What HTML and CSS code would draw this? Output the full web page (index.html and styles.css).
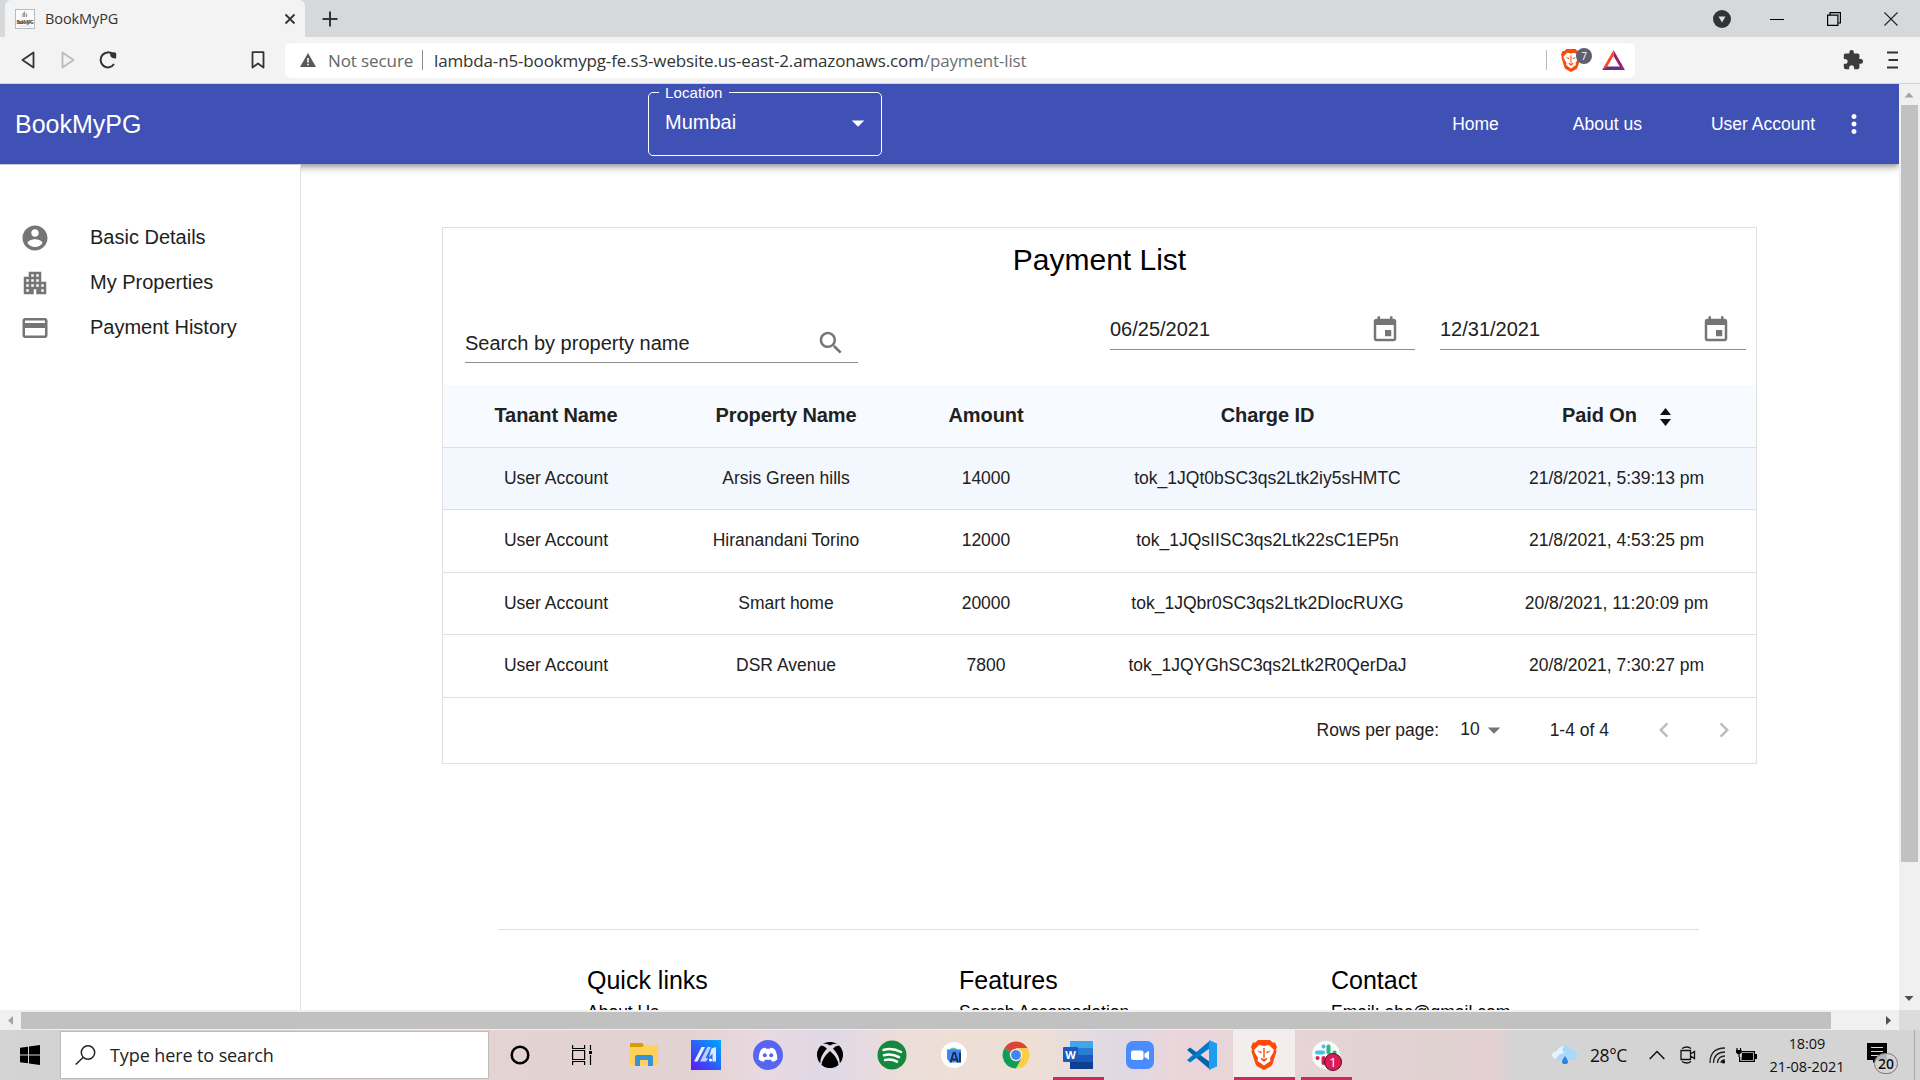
FILE: index.html
```html
<!DOCTYPE html>
<html lang="en">
<head>
<meta charset="utf-8">
<title>BookMyPG</title>
<link rel="stylesheet" href="styles.css">
</head>
<body>
<div class="screen">
  <div class="tabstrip">
    <div class="tab">
      <svg class="favicon" width="20" height="20" viewBox="0 0 20 20"><rect x=".5" y=".5" width="19" height="19" fill="#fafafa" stroke="#bbb"/><path d="M8 8V5l1.500-1.500V8M11.500 4.500V8" fill="none" stroke="#999" stroke-width="1.300"/><text x="1.500" y="14.500" font-size="5" font-weight="bold" textLength="17" fill="#555">BookMyPG</text><path d="M4 17h12" stroke="#ddd"/></svg>
      <span class="tab-title">BookMyPG</span>
      <svg width="12" height="12" viewBox="0 0 12 12"><path d="M1.500 1.500l9 9M10.500 1.500l-9 9" stroke="#333" stroke-width="1.800"/></svg>
    </div>
    <svg class="plus" width="16" height="16" viewBox="0 0 16 16"><path d="M8 .5v15M.5 8h15" stroke="#333" stroke-width="2"/></svg>
    <div class="window-controls">
      <svg width="18" height="18" viewBox="0 0 18 18"><circle cx="9" cy="9" r="9" fill="#333"/><path d="M5.500 6.500h7L9 12.500z" fill="#dcdfe1"/></svg>
      <svg width="14" height="14" viewBox="0 0 14 14"><path d="M0 7.500h14" stroke="#000" stroke-width="1"/></svg>
      <svg width="14" height="14" viewBox="0 0 14 14"><path d="M.6 3.100h10.300v10.300H.6zM3 3V.6h10.400V11H11" fill="none" stroke="#000" stroke-width="1.200"/></svg>
      <svg width="14" height="14" viewBox="0 0 14 14"><path d="M.5 .5l13 13M13.500 .5l-13 13" stroke="#222" stroke-width="1.100"/></svg>
    </div>
  </div>

  <div class="toolbar">
    <svg width="14" height="18" viewBox="0 0 14 18"><path d="M12.500 1.500v15L1.500 9z" fill="none" stroke="#333" stroke-width="1.800" stroke-linejoin="round"/></svg>
    <svg class="forward" width="14" height="18" viewBox="0 0 14 18"><path d="M1.500 1.500v15l11-7.500z" fill="none" stroke="#bbb" stroke-width="1.800" stroke-linejoin="round"/></svg>
    <svg class="reload" width="18" height="18" viewBox="0 0 18 18"><path d="M15 13A7.300 7.500 0 1 1 14 3.500" fill="none" stroke="#333" stroke-width="2"/><path d="M11.500 1.500q5-.5 5.500.5t0 5.500q-3.500 0-5-1.500t-.5-4.500z" fill="#333"/></svg>
    <svg class="bookmark" width="14" height="18" viewBox="0 0 14 18"><path d="M1.500 1.200h11v15.300L7 12.500l-5.500 4z" fill="none" stroke="#333" stroke-width="1.800" stroke-linejoin="round"/></svg>
    <div class="address">
      <svg width="16" height="14" viewBox="0 0 16 14"><path d="M8 0l8 14H0z" fill="#55585c"/><path d="M8 5v4.500M8 10.700v1.600" stroke="#fff" stroke-width="1.600"/></svg>
      <span class="insecure">Not secure</span>
      <i class="divider"></i>
      <span class="host">lambda-n5-bookmypg-fe.s3-website.us-east-2.amazonaws.com</span><span class="path">/payment-list</span>
      <i class="divider light"></i>
      <div class="shield">
        <svg width="20" height="23" viewBox="0 0 26 30"><use href="#brave"/></svg>
        <span class="shield-count">7</span>
      </div>
      <svg class="bat" width="23" height="20" viewBox="0 0 23 20"><path d="M11.500 0L0 20l5-3 6.500-11z" fill="#ff4724"/><path d="M11.500 0L23 20l-5-3-6.500-11z" fill="#9e1f63"/><path d="M0 20h23l-5-3.500H5z" fill="#662d91"/></svg>
    </div>
    <svg class="puzzle" width="22" height="22" viewBox="0 0 24 24"><path fill="#3c3c3c" d="M20.500 11H19V7c0-1.100-.9-2-2-2h-4V3.500a2.500 2.500 0 0 0-5 0V5H4c-1.100 0-1.990.9-1.990 2v3.800H3.500c1.490 0 2.700 1.210 2.700 2.700s-1.210 2.700-2.700 2.700H2V20c0 1.100.9 2 2 2h3.800v-1.500c0-1.490 1.210-2.700 2.700-2.700s2.700 1.210 2.700 2.700V22H17c1.100 0 2-.9 2-2v-4h1.500a2.500 2.500 0 0 0 0-5z"/></svg>
    <svg width="11" height="18" viewBox="0 0 11 18"><path d="M0 1.500h11M1.500 9H11M0 16.500h11" stroke="#333" stroke-width="1.800"/></svg>
  </div>

  <div class="viewport">
    <div class="page">
      <header class="appbar">
        <div class="brand">BookMyPG</div>
        <fieldset class="location">
          <legend>Location</legend>
          <div class="select"><span>Mumbai</span>
          <svg width="30" height="30" viewBox="0 0 24 24"><path d="M7 10l5 5 5-5z" fill="#fff"/></svg></div>
        </fieldset>
        <nav class="nav"><a>Home</a><a>About us</a><a>User Account</a></nav>
        <svg class="more" width="30" height="30" viewBox="0 0 24 24"><path fill="#fff" d="M12 8c1.100 0 2-.9 2-2s-.9-2-2-2-2 .9-2 2 .9 2 2 2zm0 2c-1.100 0-2 .9-2 2s.9 2 2 2 2-.9 2-2-.9-2-2-2zm0 6c-1.100 0-2 .9-2 2s.9 2 2 2 2-.9 2-2-.9-2-2-2z"/></svg>
      </header>
      <div class="body">
        <aside class="sidebar">
          <div class="side-item"><svg width="30" height="30" viewBox="0 0 24 24"><path d="M12 2C6.480 2 2 6.480 2 12s4.480 10 10 10 10-4.480 10-10S17.520 2 12 2zm0 3c1.660 0 3 1.340 3 3s-1.340 3-3 3-3-1.340-3-3 1.340-3 3-3zm0 14.200c-2.500 0-4.710-1.280-6-3.220.03-1.990 4-3.080 6-3.080 1.990 0 5.970 1.090 6 3.080-1.290 1.940-3.500 3.220-6 3.220z"/></svg><span>Basic Details</span></div>
          <div class="side-item"><svg width="30" height="30" viewBox="0 0 24 24"><path d="M17 11V3H7v4H3v14h8v-4h2v4h8V11h-4zM7 19H5v-2h2v2zm0-4H5v-2h2v2zm0-4H5V9h2v2zm4 4H9v-2h2v2zm0-4H9V9h2v2zm0-4H9V5h2v2zm4 8h-2v-2h2v2zm0-4h-2V9h2v2zm0-4h-2V5h2v2zm4 12h-2v-2h2v2zm0-4h-2v-2h2v2z"/></svg><span>My Properties</span></div>
          <div class="side-item"><svg width="30" height="30" viewBox="0 0 24 24"><path d="M20 4H4c-1.110 0-1.990.89-1.990 2L2 18c0 1.110.89 2 2 2h16c1.110 0 2-.89 2-2V6c0-1.110-.89-2-2-2zm0 14H4v-6h16v6zm0-10H4V6h16v2z"/></svg><span>Payment History</span></div>
        </aside>
        <main class="main">
          <section class="card">
            <h1>Payment List</h1>
            <div class="filters">
              <div class="field search"><span>Search by property name</span><svg width="30" height="30" viewBox="0 0 24 24"><path d="M15.500 14h-.79l-.28-.27C15.410 12.590 16 11.110 16 9.500 16 5.910 13.090 3 9.500 3S3 5.910 3 9.500 5.910 16 9.500 16c1.610 0 3.090-.59 4.230-1.570l.27.28v.79l5 4.990L20.490 19l-4.990-5zm-6 0C7.010 14 5 11.990 5 9.500S7.010 5 9.500 5 14 7.010 14 9.500 11.990 14 9.500 14z"/></svg></div>
              <div class="field date"><span>06/25/2021</span><svg width="30" height="30" viewBox="0 0 24 24"><path d="M17 12h-5v5h5v-5zM16 1v2H8V1H6v2H5c-1.110 0-1.990.9-1.990 2L3 19c0 1.100.89 2 2 2h14c1.100 0 2-.9 2-2V5c0-1.100-.9-2-2-2h-1V1h-2zm3 18H5V8h14v11z"/></svg></div>
              <div class="field date"><span>12/31/2021</span><svg width="30" height="30" viewBox="0 0 24 24"><path d="M17 12h-5v5h5v-5zM16 1v2H8V1H6v2H5c-1.110 0-1.990.9-1.990 2L3 19c0 1.100.89 2 2 2h14c1.100 0 2-.9 2-2V5c0-1.100-.9-2-2-2h-1V1h-2zm3 18H5V8h14v11z"/></svg></div>
            </div>
            <div class="row head"><span>Tanant Name</span><span>Property Name</span><span>Amount</span><span>Charge ID</span><span class="paid">Paid On<svg width="11" height="18" viewBox="0 0 11 18"><path d="M0 7l5.500-7L11 7zM0 11h11l-5.500 7z"/></svg></span></div>
            <div class="row hover"><span>User Account</span><span>Arsis Green hills</span><span>14000</span><span>tok_1JQt0bSC3qs2Ltk2iy5sHMTC</span><span>21/8/2021, 5:39:13 pm</span></div>
            <div class="row tall"><span>User Account</span><span>Hiranandani Torino</span><span>12000</span><span>tok_1JQsIISC3qs2Ltk22sC1EP5n</span><span>21/8/2021, 4:53:25 pm</span></div>
            <div class="row"><span>User Account</span><span>Smart home</span><span>20000</span><span>tok_1JQbr0SC3qs2Ltk2DIocRUXG</span><span>20/8/2021, 11:20:09 pm</span></div>
            <div class="row tall"><span>User Account</span><span>DSR Avenue</span><span>7800</span><span>tok_1JQYGhSC3qs2Ltk2R0QerDaJ</span><span>20/8/2021, 7:30:27 pm</span></div>
            <div class="pagination">
              <span>Rows per page:</span>
              <span class="size">10</span>
              <svg class="caret" width="30" height="30" viewBox="0 0 24 24"><path d="M7 10l5 5 5-5z"/></svg>
              <span class="range">1-4 of 4</span>
              <svg class="prev" width="30" height="30" viewBox="0 0 24 24"><path d="M15.410 7.410L14 6l-6 6 6 6 1.410-1.410L10.830 12z"/></svg>
              <svg class="next" width="30" height="30" viewBox="0 0 24 24"><path d="M10 6L8.590 7.410 13.170 12l-4.580 4.590L10 18l6-6z"/></svg>
            </div>
          </section>
          <footer class="footer">
            <div><h2>Quick links</h2><p>About Us</p></div>
            <div><h2>Features</h2><p>Search Accomodation</p></div>
            <div><h2>Contact</h2><p>Email: abc@gmail.com</p></div>
          </footer>
        </main>
      </div>
    </div>
    <div class="vscroll">
      <svg width="21" height="21" viewBox="0 0 21 21"><path d="M5.500 13.500L10 8.500l4.500 5z" fill="#a3a3a3"/></svg>
      <div class="vthumb"></div>
      <svg class="down" width="21" height="21" viewBox="0 0 21 21"><path d="M5.500 7L10 12l4.500-5z" fill="#505050"/></svg>
    </div>
  </div>
  <div class="hscroll">
    <svg width="21" height="20" viewBox="0 0 21 20"><path d="M13 6v9L8 10.500z" fill="#a3a3a3"/></svg>
    <div class="hthumb"></div>
    <svg class="right" width="21" height="20" viewBox="0 0 21 20"><path d="M8 6v9l5-4.500z" fill="#505050"/></svg>
    <div class="corner"></div>
  </div>

  <div class="taskbar">
    <div class="start"><svg width="20" height="20" viewBox="0 0 20 20"><path d="M0 2.800L8 1.700v7.800H0zM9 1.500L20 0v9.500H9zM0 10.500h8v7.800l-8-1.100zM9 10.500h11V20L9 18.500z"/></svg></div>
    <div class="task-search">
      <svg width="21" height="20" viewBox="0 0 21 20"><circle cx="13" cy="7.500" r="6.700" fill="none" stroke="#222" stroke-width="1.500"/><path d="M8.300 12.300L.7 19.500" stroke="#222" stroke-width="1.500"/></svg>
      <span>Type here to search</span>
    </div>
    <div class="task"><svg width="20" height="20" viewBox="0 0 20 20"><circle cx="10" cy="10" r="8.300" fill="none" stroke="#000" stroke-width="2.500"/></svg></div>
    <div class="task"><svg width="20" height="20" viewBox="0 0 20 20"><path d="M.6 0v3.500h12V0M.6 5.500h12v9H.6zM.6 20v-3.500h12V20M18.500 0v5M18.500 10v10" fill="none" stroke="#000" stroke-width="1.200"/><path d="M17 6h3v3h-3z"/></svg></div>
    <div class="task"><svg width="28" height="24" viewBox="0 0 28 24"><path d="M0 1q0-1 1-1h11l2 2-2 3H0z" fill="#d99b05"/><path d="M0 4h12l2-2h13q1 0 1 1v19H0z" fill="#ffd158"/><path d="M5 14q0-2 2-2h14q2 0 2 2v9h-5v-6h-8v6H5z" fill="#3592dc"/></svg></div>
    <div class="task"><svg width="30" height="30" viewBox="0 0 30 30"><defs><linearGradient id="ga" x1="0" y1="1" x2="1" y2="0"><stop stop-color="#6414fa"/><stop offset=".5" stop-color="#2a63f8"/><stop offset="1" stop-color="#00a8ff"/></linearGradient></defs><path d="M0 0h30v30H0z" fill="url(#ga)"/><path d="M3 21.500L10.500 7H14L6.500 21.500z" fill="#e8f0ff"/><path d="M9 21.500L16.500 7H20l-5.500 11H17l-1.800 3.500z" fill="#bcd4ff"/><path d="M20.500 8.500L25 7v14.500h-3.500v-8L18 17.500z" fill="#dcecff"/><circle cx="19.500" cy="20" r="1.600" fill="#fff"/></svg></div>
    <div class="task"><svg width="30" height="30" viewBox="0 0 30 30"><circle cx="15" cy="15" r="15" fill="#5865f2"/><path d="M10.500 8q2-.9 3 .8h3q1-1.700 3-.8 2 .5 3 2.500 2 4.500 1.800 9-2.300 2.200-5 2.300l-1.300-2h-6l-1.300 2q-3-.3-5-2.300-.3-4.500 1.800-9 1-2 3-2.500z" fill="#fff"/><circle cx="11.800" cy="15.300" r="2" fill="#5865f2"/><circle cx="18.200" cy="15.300" r="2" fill="#5865f2"/></svg></div>
    <div class="task"><svg width="26" height="26" viewBox="0 0 26 26"><path d="M13 3.500Q9 1 5.500 2.300a13 13 0 0 1 15 0Q17 1 13 3.500zM4 3.500q3 0 6 3Q3 14 3.200 21.500A13 13 0 0 1 4 3.500zM22 3.500q-3 0-6 3 7 7.500 6.800 15A13 13 0 0 0 22 3.500zM13 9q8 7 8.500 14a13 13 0 0 1-17 0Q5 16 13 9z"/></svg></div>
    <div class="task"><svg width="30" height="30" viewBox="0 0 30 30"><circle cx="15" cy="15" r="14.500" fill="#15883e"/><path d="M6.500 10q9-2.500 17.500 2M7 15.200q8-2 15 2M8 20q6.500-1.500 12 1.700" fill="none" stroke="#fff" stroke-width="2.500" stroke-linecap="round"/></svg></div>
    <div class="task"><svg width="26" height="26" viewBox="0 0 26 26"><circle cx="13" cy="13" r="13" fill="#fff"/><path d="M8 8q4-5 9 0z" fill="#3ddc84"/><path d="M6 7.500h14v13H9L6 17z" fill="#4285f4"/><path d="M9.500 20.500l3-9.500h1.500l3 9.500M11 17.500h4.500M19 10.500v10" fill="none" stroke="#173046" stroke-width="1.800"/></svg></div>
    <div class="task"><svg width="28" height="28" viewBox="0 0 28 28"><path d="M14 14L2.300 7.300A13.500 13.500 0 0 1 25.700 7.300H14z" fill="#db4437"/><path d="M14 14L2.300 7.300A13.500 13.500 0 0 0 14 27.500l5.500-10z" fill="#0f9d58"/><path d="M14 7.300h11.700A13.500 13.500 0 0 1 14 27.500l6-10z" fill="#ffcd40"/><circle cx="14" cy="14" r="6.200" fill="#f1f1f1"/><circle cx="14" cy="14" r="4.900" fill="#4285f4"/></svg></div>
    <div class="task open"><svg width="30" height="28" viewBox="0 0 30 28"><path d="M7 0h23v7H7z" fill="#41a5ee"/><path d="M7 7h23v7H7z" fill="#2b7cd3"/><path d="M7 14h23v7H7z" fill="#185abd"/><path d="M7 21h23v7H7z" fill="#103f91"/><rect y="6" width="15" height="15" rx="1" fill="#185abd"/><text x="7.500" y="17.500" text-anchor="middle" font-size="11" font-weight="bold" fill="#fff">W</text></svg></div>
    <div class="task"><svg width="28" height="28" viewBox="0 0 28 28"><rect width="28" height="28" rx="7" fill="#4a8cff"/><rect x="5" y="9.500" width="12.500" height="9.500" rx="2" fill="#fff"/><path d="M18.500 12.700L23 9.800v9l-4.500-2.900z" fill="#fff"/></svg></div>
    <div class="task"><svg width="30" height="30" viewBox="0 0 30 30"><path d="M0 10l3-2.500L23 22v7.500z" fill="#0065a9"/><path d="M0 20l3 2.500L23 8V.5z" fill="#007acc"/><path d="M22 0l8 3.500v23L22 30z" fill="#1f9cf0"/></svg></div>
    <div class="task open active"><svg width="26" height="30" viewBox="0 0 26 30"><defs><g id="brave"><path d="M7 0h12l2.500 2.500L24 2.500l2 4.500-1 2.500.5 2-4 12.500q-.5 1.500-2 2.500L13 30l-6.500-3.500q-1.500-1-2-2.500L.5 11.500l.5-2L0 7l2-4.500 2.500 0z" fill="#fb4a0a"/><path d="M8 5l5 1 5-1 5 5-1 3-3 5 .5 3-6.500 4.500L6.500 21l.5-3-3-5-1-3z" fill="#fff"/><path d="M6 10.500l5 1.300-1 1.700zM20 10.500l-5 1.300 1 1.700zM12.300 8h1.400v10h-1.400zM9.500 17.500l3.500 1.700 3.500-1.700-1 2.500-2.500 1.700-2.500-1.700z" fill="#fb4a0a"/></g></defs><use href="#brave"/></svg></div>
    <div class="task open"><div class="slack">
      <svg width="30" height="30" viewBox="0 0 30 30"><circle cx="15" cy="15" r="14.500" fill="#fafafa" stroke="#ddd"/><g fill="none" stroke-width="4" stroke-linecap="round"><path d="M6 12.500h6M12.500 6.500h.1" stroke="#36c5f0"/><path d="M17.500 6.500v6M23.500 12.500h.1" stroke="#2eb67d"/><path d="M12.500 18v5M6.500 18h.1" stroke="#e01e5a"/><path d="M18 18h6" stroke="#ecb22e"/></g></svg>
      <span class="slack-badge">1</span></div></div>
    <div class="tray">
      <svg width="26" height="20" viewBox="0 0 26 20"><path d="M6 15a5 5 0 0 1-.5-9Q7 0 13 .5q5 0 6 4.500 6 0 6.500 5 0 4.500-5 5z" fill="#a9d8fa"/><path d="M4 14Q0 13 0 10t5-4Q7 1 12 1q-3 3 0 7-5 0-8 6z" fill="#e3f3ff"/><path d="M13 11q-6 8 0 8t0-8z" fill="#2784df"/></svg>
      <span class="temp">28°C</span>
      <svg class="chevron" width="16" height="10" viewBox="0 0 16 10"><path d="M.7 9L8 1.500 15.300 9" fill="none" stroke="#111" stroke-width="1.500"/></svg>
      <svg class="cam" width="16" height="18" viewBox="0 0 16 18"><path d="M1 4.500h9.500v9H1zM10.500 8l4-2.500v7l-4-2.500M2 2.500q5-3 9 0M2 15.500q5 3 9 0" fill="none" stroke="#111" stroke-width="1.300"/></svg>
      <svg class="wifi" width="17" height="17" viewBox="0 0 17 17"><path d="M1 16Q1 1 16 1M4.500 16Q5 5 16 5M8.500 16Q9 9 16 9" fill="none" stroke="#222" stroke-width="1.300"/><path d="M12 16q0-3 4-3" fill="none" stroke="#222" stroke-width="1.300"/><circle cx="14.500" cy="15" r="1.500"/></svg>
      <svg class="battery" width="21" height="14" viewBox="0 0 21 14"><path d="M5 3.600h13.400v9.800H3.600V9M3 5v4M1 0v3M4.500 0v3" fill="none" stroke="#000" stroke-width="1.200"/><path d="M0 2h5.500v2.500L4 6H1.500L0 4.500zM6 5h11v7H5.500zM19 6h2v5h-2z"/></svg>
      <div class="clock"><span>18:09</span><span>21-08-2021</span></div>
      <div class="notice">
        <svg width="20" height="20" viewBox="0 0 20 20"><path d="M0 0h20v17H10l-4 3v-3H0z"/><path d="M4 4.500h12M4 8.500h12M4 12.500h8" stroke="#ddd" stroke-width="1.200"/></svg>
        <span class="notice-count">20</span>
      </div>
      <i class="peek"></i>
    </div>
  </div>
</div>
</body>
</html>
```
FILE: styles.css
```css
* { box-sizing: border-box; }
body { margin: 0; font-family: "Liberation Sans", Arial, sans-serif; color: #212121; }
svg { display: block; flex: none; }
h1, h2, p { margin: 0; font-weight: 400; }
.screen { width: 1920px; height: 1080px; display: flex; flex-direction: column; overflow: hidden; background: #fff; }

/* Browser chrome */
.tabstrip, .toolbar, .taskbar { font-family: "Open Sans", "Noto Sans", sans-serif; }
.tabstrip { height: 37px; flex: none; background: #d5d9dc; display: flex; align-items: center; padding-left: 5px; }
.tab { width: 300px; height: 37px; background: #f3f3f3; border-radius: 6px 6px 0 0; display: flex; align-items: center; padding: 0 9px 0 10px; }
.tab-title { flex: 1; margin-left: 10px; font-size: 14.5px; color: #333; letter-spacing: -.1px; }
.plus { margin-left: 17px; }
.window-controls { margin-left: auto; display: flex; align-items: center; padding-right: 22px; gap: 43px; }
.window-controls svg:first-child { margin-right: -4px; }
.toolbar { height: 47px; flex: none; background: #f3f3f3; border-bottom: 1px solid #d3d5d8; display: flex; align-items: center; padding: 0 22px 0 21px; }
.forward { margin-left: 26px; }
.reload { margin-left: 24px; }
.bookmark { margin-left: 134px; }
.address { margin-left: 20px; width: 1350px; height: 35px; background: #fff; border-radius: 6px; display: flex; align-items: center; padding: 0 10px 0 15px; font-size: 17px; color: #333; white-space: nowrap; }
.insecure { margin-left: 12px; color: #63666a; width: 84px; letter-spacing: -.1px; }
.divider { width: 1px; height: 20px; background: #8a8a8a; margin: 0 11px 0 10px; }
.divider.light { margin: 0 14px 0 auto; background: #bbb; }
.host, .path { letter-spacing: -.145px; }
.path { color: #6c6f73; }
.shield { position: relative; width: 31px; }
.shield-count { position: absolute; left: 15px; top: -1px; width: 16px; height: 16px; border-radius: 8px; background: #5d6070; color: #fff; font-size: 10px; line-height: 16px; text-align: center; }
.bat { margin-left: 10px; }
.puzzle { margin-left: auto; margin-right: 23px; }

/* Page */
.viewport { height: 926px; flex: none; display: flex; }
.page { width: 1899px; height: 926px; overflow: hidden; display: flex; flex-direction: column; }
.appbar { position: relative; height: 80px; flex: none; background: #3f51b5; color: #fff; display: flex; align-items: center; padding: 0 30px 0 15px; box-shadow: 0 2px 5px -1px rgba(0,0,0,.3), 0 5px 6px rgba(0,0,0,.14), 0 1px 12px rgba(0,0,0,.12); }
.brand { width: 633px; font-size: 25px; }
.location { margin: 0; width: 234px; height: 71.5px; align-self: flex-start; border: 1px solid #fff; border-radius: 5px; padding: 0 8px 0 16px; }
.location legend { font-size: 15px; line-height: 17px; padding: 0 6px; margin-left: -6px; margin-top: 0; letter-spacing: .1px; }
.select { display: flex; justify-content: space-between; align-items: center; font-size: 20px; margin-top: 7px; }
.select span { margin-top: -2px; }
.nav { margin-left: auto; display: flex; gap: 69px; font-size: 17.5px; }
.nav a:first-child { margin-right: 5px; }
.more { margin-left: 24px; }
.body { flex: 1; display: flex; min-height: 0; }
.sidebar { position: relative; width: 301px; background: #fff; border-right: 1px solid #dedede; border-top: 1px solid #ccc; padding: 58px 0 0 20px; display: flex; flex-direction: column; gap: 15px; }
.side-item { display: flex; align-items: center; height: 30px; gap: 40px; font-size: 20px; }
.side-item span { margin-top: -2px; }
.side-item svg, .field svg, .caret { fill: #757575; }
.main { flex: 1; display: flex; flex-direction: column; padding: 63px 142px 0 141px; }
.card { border: 1px solid #e0e0e0; height: 537px; flex: none; }
.card h1 { text-align: center; font-size: 30px; line-height: 40px; height: 82px; padding-top: 12px; color: #000; }
.filters { height: 75px; display: flex; align-items: flex-start; padding: 0 10px 0 22px; }
.field { display: flex; align-items: center; justify-content: space-between; border-bottom: 1px solid #8c8c8c; height: 40px; font-size: 20px; }
.search { width: 393px; margin: 13px 252px 0 0; padding-right: 12px; }
.search span { margin-top: 1px; }
.date { width: 305px; padding-right: 15px; margin-right: 25px; }
.date:last-child { width: 306px; margin-right: 0; }
.row { display: grid; grid-template-columns: 226px 234px 166px 397px 279px; align-items: center; justify-items: center; height: 62px; border-bottom: 1px solid #e0e0e0; font-size: 17.5px; }
.row span:last-child { margin-left: 22px; }
.row.tall, .row.head { height: 63px; padding-bottom: 2px; }
.row.head { background: #f7faff; font-size: 20px; font-weight: 700; letter-spacing: -.1px; }
.row.hover { background: #f3f8ff; }
.paid { display: flex; align-items: center; gap: 23px; }
.paid svg { margin-top: 4px; fill: #111; }
.pagination { height: 65px; display: flex; align-items: center; justify-content: flex-end; padding: 0 17px 2px 0; font-size: 17.5px; }
.pagination span { margin-top: 1px; }
.pagination .size { margin: 0 0 0 21px; }
.caret { margin-left: -1px; }
.pagination .range { margin-left: 41px; }
.prev, .next { fill: #bdbdbd; }
.prev { margin-left: 40px; }
.next { margin-left: 30px; }
.footer { margin: 165px 58px 0 56px; border-top: 1px solid #dedede; display: grid; grid-template-columns: 372px 372px 1fr; padding: 34px 0 0 89px; color: #000; }
.footer h2 { font-size: 25px; line-height: 32px; }
.footer p { font-size: 17.5px; line-height: 26px; padding-top: 3px; }

/* Scrollbars */
.vscroll { width: 21px; background: #f0f0f0; display: flex; flex-direction: column; align-items: center; }
.vthumb { width: 17px; height: 757px; background: #c1c1c1; }
.down { margin-top: auto; }
.hscroll { height: 20px; flex: none; background: #f0f0f0; display: flex; align-items: center; }
.hthumb { width: 1810px; height: 17px; background: #c1c1c1; }
.right { margin-left: auto; }
.corner { width: 21px; height: 20px; background: #dcdcdc; }

/* Taskbar */
.taskbar { height: 50px; flex: none; display: flex; background: linear-gradient(90deg, #d4d4d4 0, #d2d2d2 60px, #e3d3d3 490px, #e2d2d2 690px, #e8d9e0 760px, #dfd8e6 830px, #ebddd9 900px, #eedfd6 960px, #eddfd6 1040px, #dfd9e4 1115px, #ead6da 1180px, #e5d3d5 1320px, #e0d1d1 1450px, #e3cfd1 1490px, #d5d4d4 1515px, #d4d4d4 1920px); }
.start { width: 60px; display: flex; align-items: center; justify-content: center; }
.task-search { width: 429px; margin: 1px 0; background: #fff; border: 1px solid #bcbcbc; display: flex; align-items: center; gap: 14px; padding-left: 14px; font-size: 18px; letter-spacing: -.1px; color: #222; }
.task { width: 62px; display: flex; align-items: center; justify-content: center; }
.task.open { background: linear-gradient(#cb2a5b, #cb2a5b) center bottom / 51px 3px no-repeat; }
.task.active { background: linear-gradient(#cb2a5b, #cb2a5b) center bottom / 61px 3px no-repeat, #f4eded; }
.slack { position: relative; }
.slack-badge { position: absolute; left: 13px; top: 13px; width: 18px; height: 18px; border-radius: 9px; background: #dc1c55; border: 1px solid #4c1026; color: #fff; font-size: 13px; line-height: 16px; text-align: center; }
.tray { flex: 1; display: flex; align-items: center; padding-left: 195px; color: #111; }
.temp { margin-left: 12px; width: 40px; font-size: 17.5px; white-space: nowrap; letter-spacing: -.4px; }
.chevron { margin-left: 19px; }
.cam { margin-left: 15px; }
.wifi { margin-left: 13px; }
.battery { margin-left: 10px; }
.clock { margin-left: 11px; width: 78px; display: flex; flex-direction: column; align-items: center; font-size: 14.5px; line-height: 23px; white-space: nowrap; letter-spacing: -.05px; }
.notice { position: relative; margin-left: 21px; margin-bottom: 4px; }
.notice-count { position: absolute; left: 7px; top: 10px; width: 24px; height: 21px; border: 1px solid #777; border-radius: 11px; background: rgba(212,212,212,.85); font-size: 14px; font-weight: 600; line-height: 19px; text-align: center; }
.peek { width: 1px; height: 50px; background: #a8a8a8; margin-left: auto; margin-right: 5px; }
```
